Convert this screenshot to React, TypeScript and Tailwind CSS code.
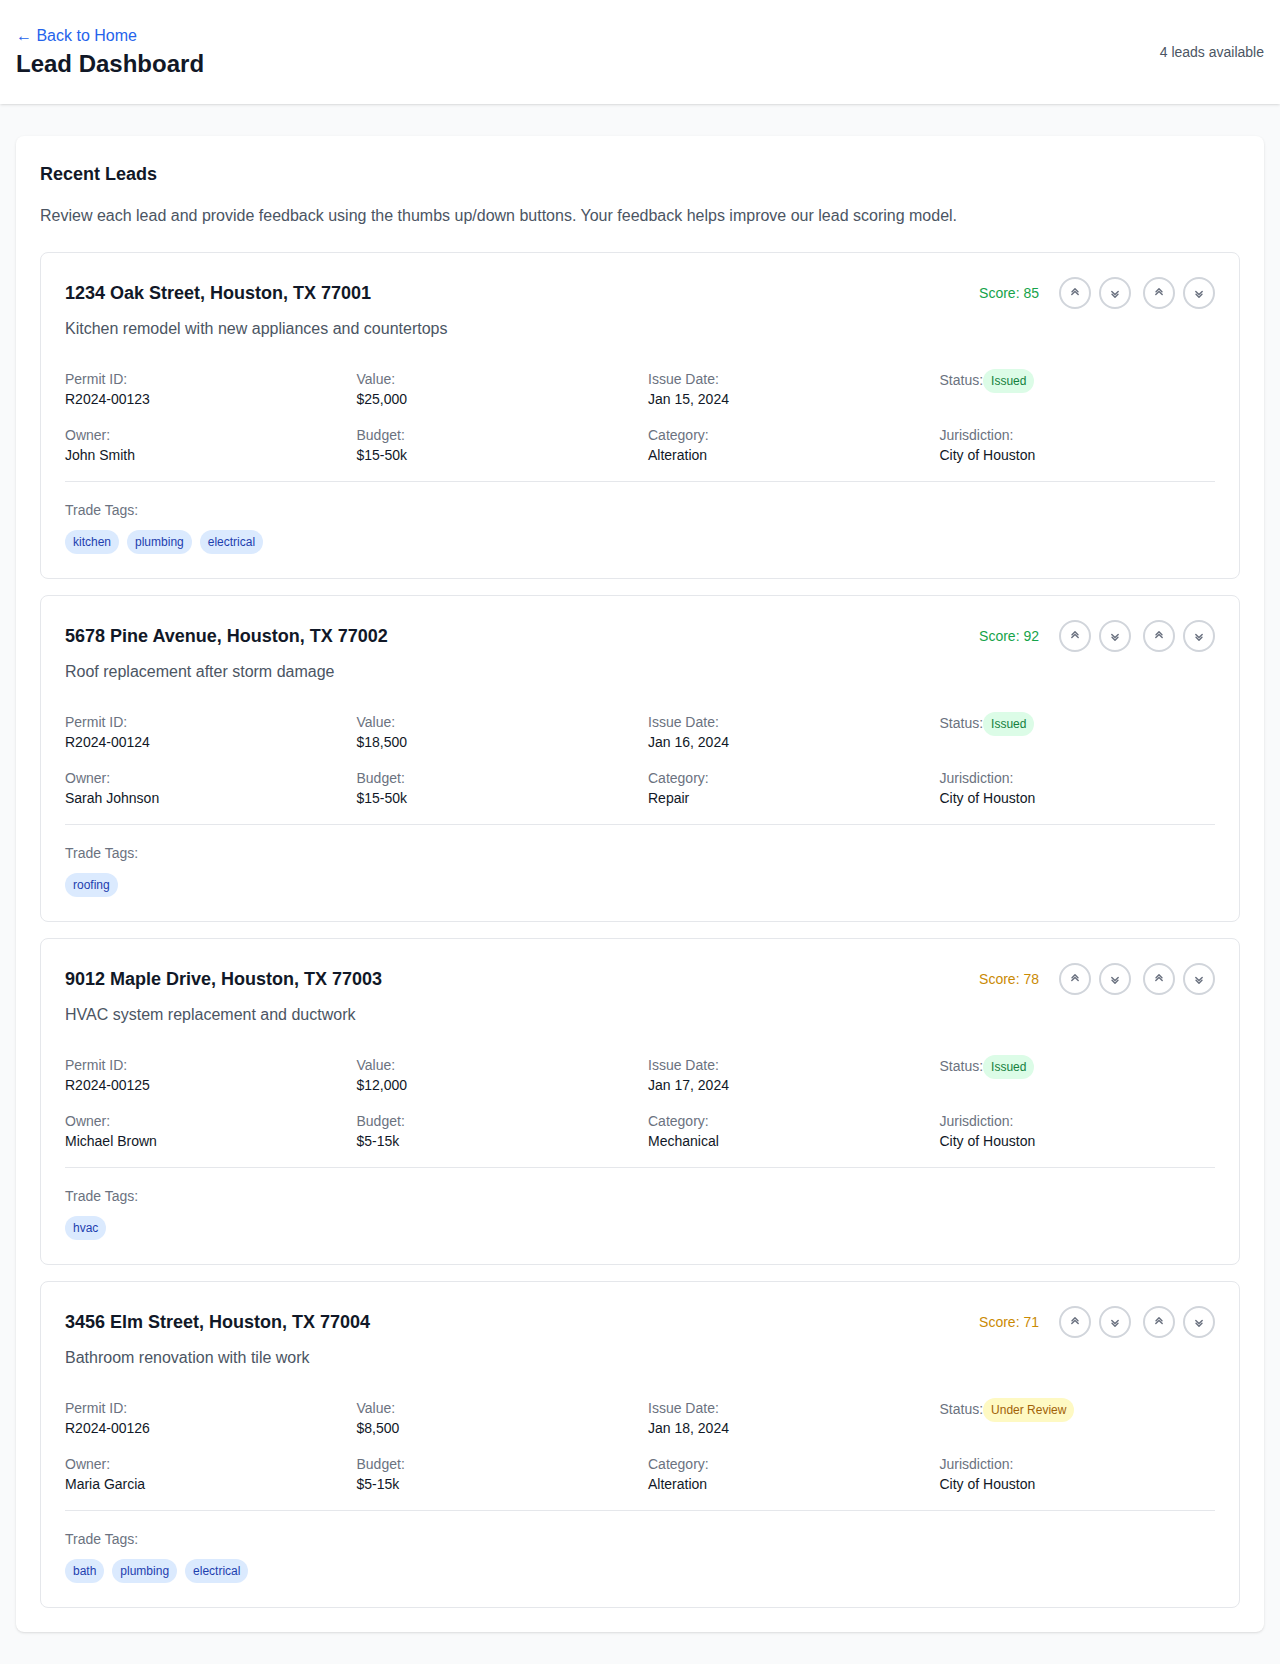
type Lead = {
  address: string;
  description: string;
  score: number;
  permitId: string;
  value: string;
  issueDate: string;
  status: string;
  owner: string;
  budget: string;
  category: string;
  jurisdiction: string;
  tags: string[];
};

const leads: Lead[] = [
  {
    address: "1234 Oak Street, Houston, TX 77001",
    description: "Kitchen remodel with new appliances and countertops",
    score: 85,
    permitId: "R2024-00123",
    value: "$25,000",
    issueDate: "Jan 15, 2024",
    status: "Issued",
    owner: "John Smith",
    budget: "$15-50k",
    category: "Alteration",
    jurisdiction: "City of Houston",
    tags: ["kitchen", "plumbing", "electrical"],
  },
  {
    address: "5678 Pine Avenue, Houston, TX 77002",
    description: "Roof replacement after storm damage",
    score: 92,
    permitId: "R2024-00124",
    value: "$18,500",
    issueDate: "Jan 16, 2024",
    status: "Issued",
    owner: "Sarah Johnson",
    budget: "$15-50k",
    category: "Repair",
    jurisdiction: "City of Houston",
    tags: ["roofing"],
  },
  {
    address: "9012 Maple Drive, Houston, TX 77003",
    description: "HVAC system replacement and ductwork",
    score: 78,
    permitId: "R2024-00125",
    value: "$12,000",
    issueDate: "Jan 17, 2024",
    status: "Issued",
    owner: "Michael Brown",
    budget: "$5-15k",
    category: "Mechanical",
    jurisdiction: "City of Houston",
    tags: ["hvac"],
  },
  {
    address: "3456 Elm Street, Houston, TX 77004",
    description: "Bathroom renovation with tile work",
    score: 71,
    permitId: "R2024-00126",
    value: "$8,500",
    issueDate: "Jan 18, 2024",
    status: "Under Review",
    owner: "Maria Garcia",
    budget: "$5-15k",
    category: "Alteration",
    jurisdiction: "City of Houston",
    tags: ["bath", "plumbing", "electrical"],
  },
];

const upPath = "M6 12l4-4 4 4M6.3 8.3l3.7-3.7 3.7 3.7";
const downPath = "M6 8l4 4 4-4M6.3 11.7l3.7 3.7 3.7-3.7";

function VoteButton({ up = false }: { up?: boolean }) {
  return (
    <button
      aria-label={up ? "Thumbs up" : "Thumbs down"}
      className="flex h-8 w-8 items-center justify-center rounded-full border-2 border-[#d1d5db] text-[#6b7280]"
    >
      <svg
        className="h-4 w-4"
        viewBox="0 0 20 20"
        fill="none"
        stroke="currentColor"
        strokeWidth="1.8"
        strokeLinecap="round"
        strokeLinejoin="round"
      >
        <path d={up ? upPath : downPath} />
      </svg>
    </button>
  );
}

function VotePair() {
  return (
    <div className="flex gap-2">
      <VoteButton up />
      <VoteButton />
    </div>
  );
}

function Field({ label, value }: { label: string; value: string }) {
  return (
    <div>
      <span className="text-[#6b7280]">{label}:</span>
      <p className="font-medium text-[#111827]">{value}</p>
    </div>
  );
}

function LeadCard({ lead }: { lead: Lead }) {
  return (
    <div className="rounded-lg border border-[#e5e7eb] p-6">
      <div className="flex items-center justify-between">
        <h3 className="text-lg font-semibold text-[#111827]">{lead.address}</h3>
        <div className="flex items-center gap-3">
          <span
            className={`mr-2 text-sm font-medium ${lead.score >= 80 ? "text-[#16a34a]" : "text-[#ca8a04]"}`}
          >
            Score: {lead.score}
          </span>
          <VotePair />
          <VotePair />
        </div>
      </div>
      <p className="mt-2 text-[#4b5563]">{lead.description}</p>
      <div className="mt-7 grid grid-cols-4 gap-4 text-sm">
        <Field label="Permit ID" value={lead.permitId} />
        <Field label="Value" value={lead.value} />
        <Field label="Issue Date" value={lead.issueDate} />
        <div>
          <span className="text-[#6b7280]">Status:</span>
          <span
            className={`inline-flex rounded-full px-2 py-1 text-xs font-medium ${
              lead.status === "Issued" ? "bg-[#dcfce7] text-[#15803d]" : "bg-[#fef9c3] text-[#a16207]"
            }`}
          >
            {lead.status}
          </span>
        </div>
        <Field label="Owner" value={lead.owner} />
        <Field label="Budget" value={lead.budget} />
        <Field label="Category" value={lead.category} />
        <Field label="Jurisdiction" value={lead.jurisdiction} />
      </div>
      <div className="mt-4 border-t border-[#e5e7eb] pt-4">
        <span className="text-sm text-[#6b7280]">Trade Tags:</span>
        <div className="mt-2 flex gap-2">
          {lead.tags.map((tag) => (
            <span
              key={tag}
              className="inline-flex rounded-full bg-[#dbeafe] px-2 py-1 text-xs font-medium text-[#1e40af]"
            >
              {tag}
            </span>
          ))}
        </div>
      </div>
    </div>
  );
}

export default function App() {
  return (
    <div className="min-h-screen bg-[#f9fafb] font-['Liberation_Sans',sans-serif]">
      <header className="bg-white shadow-sm">
        <div className="flex items-center justify-between px-4 py-6">
          <div>
            <a href="#" className="block text-[#2563eb]">
              ← Back to Home
            </a>
            <h1 className="text-2xl font-bold text-[#111827]">Lead Dashboard</h1>
          </div>
          <span className="text-sm text-[#4b5563]">4 leads available</span>
        </div>
      </header>
      <main className="px-4 py-8">
        <div className="rounded-lg bg-white p-6 shadow-sm">
          <h2 className="mb-4 text-lg font-semibold text-[#111827]">Recent Leads</h2>
          <p className="mb-6 text-[#4b5563]">
            Review each lead and provide feedback using the thumbs up/down buttons. Your feedback helps improve our
            lead scoring model.
          </p>
          <div className="flex flex-col gap-4">
            {leads.map((lead) => (
              <LeadCard key={lead.permitId} lead={lead} />
            ))}
          </div>
        </div>
      </main>
    </div>
  );
}
